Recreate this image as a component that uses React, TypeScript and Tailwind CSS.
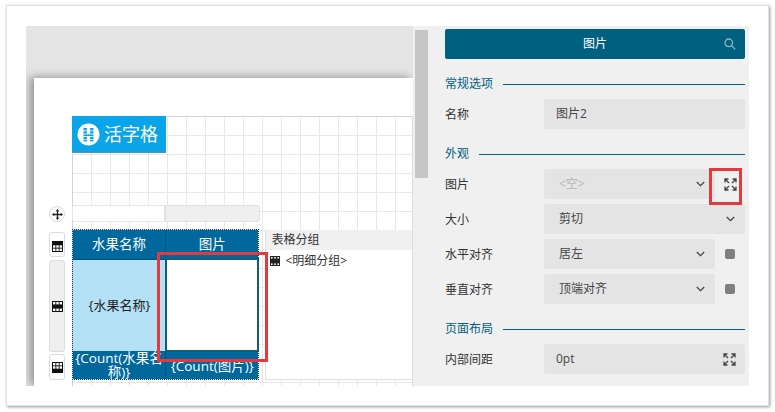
const FONT = "font-['Open_Sans','Noto_Sans_CJK_SC',sans-serif]";

function Expand({ color = "#444" }: { color?: string }) {
  return (
    <svg width="13" height="13" viewBox="0 0 13 13" fill="none" stroke={color} strokeWidth="1.3">
      <path d="M1 4.5V1h3.5M1 1l4 4" />
      <path d="M12 4.5V1H8.5M12 1L8 5" />
      <path d="M1 8.5V12h3.5M1 12l4-4" />
      <path d="M12 8.5V12H8.5M12 12L8 8" />
    </svg>
  );
}

function Chevron() {
  return (
    <svg width="9" height="6" viewBox="0 0 9 6" fill="none" stroke="#444" strokeWidth="1.3">
      <path d="M.8 1l3.7 3.6L8.2 1" />
    </svg>
  );
}

function TableIcon({ variant }: { variant: "top" | "mid" | "bottom" }) {
  const rows = { top: [0, 1, 1], mid: [1, 0, 1], bottom: [1, 1, 0] }[variant];
  return (
    <svg width="11" height="11" viewBox="0 0 11 11">
      <rect width="11" height="11" fill="#111" />
      {[0, 1, 2].map((c) =>
        [0, 1, 2].map((r) => (
          <rect key={`${c}${r}`} x={1 + c * 3.3} y={1 + r * 3.3} width="2.4" height="2.4" fill={rows[r] ? "#fff" : "#111"} />
        )),
      )}
    </svg>
  );
}

function FilmIcon() {
  return (
    <svg width="10" height="10" viewBox="0 0 10 10">
      <rect width="10" height="10" fill="#222" />
      <rect x="1" y="1" width="1.6" height="1.6" fill="#fff" />
      <rect x="4.2" y="1" width="1.6" height="1.6" fill="#fff" />
      <rect x="7.4" y="1" width="1.6" height="1.6" fill="#fff" />
      <rect x="1" y="7.4" width="1.6" height="1.6" fill="#fff" />
      <rect x="4.2" y="7.4" width="1.6" height="1.6" fill="#fff" />
      <rect x="7.4" y="7.4" width="1.6" height="1.6" fill="#fff" />
    </svg>
  );
}

function Logo() {
  return (
    <svg width="23" height="23" viewBox="0 0 23 23">
      <circle cx="11.5" cy="11.5" r="11" fill="#fff" />
      <g fill="#0aa5e8">
        <rect x="6.5" y="5" width="3.4" height="2.4" />
        <rect x="13.1" y="5" width="3.4" height="2.4" />
        <rect x="6.5" y="8.2" width="3.4" height="2.4" />
        <rect x="13.1" y="8.2" width="3.4" height="2.4" />
        <rect x="6.5" y="11.4" width="10" height="1.6" />
        <rect x="6.5" y="13.8" width="3.4" height="2.2" />
        <rect x="13.1" y="13.8" width="3.4" height="2.2" />
        <rect x="6.5" y="16.6" width="3.4" height="1.8" />
        <rect x="13.1" y="16.6" width="3.4" height="1.8" />
      </g>
    </svg>
  );
}

function Section({ title, className = "" }: { title: string; className?: string }) {
  return (
    <div className={`flex items-center h-[20px] mt-[15px] mb-[5px] ${className}`}>
      <span className="text-[12px] text-[#00607f] leading-none whitespace-nowrap">{title}</span>
      <div className="h-px bg-[#00607f] ml-[10px] flex-1" />
    </div>
  );
}

function Row({ label, children, className = "" }: { label: string; children: React.ReactNode; className?: string }) {
  return (
    <div className={`flex items-center h-[30px] ${className}`}>
      <span className="w-[99px] pt-[1px] text-[12px] text-[#333] shrink-0">{label}</span>
      {children}
    </div>
  );
}

function Select({ value, wide, muted }: { value: string; wide?: boolean; muted?: boolean }) {
  return (
    <div className={`h-[30px] rounded-[2px] bg-[#e4e4e4] flex items-center pl-[15px] pr-[10px] ${wide ? "w-[201px]" : "w-[171px]"}`}>
      <span className={`flex-1 text-[12px] ${muted ? "text-[#b5b5b5]" : "text-[#444]"}`}>{value}</span>
      <Chevron />
    </div>
  );
}

function Square() {
  return <div className="ml-[10px] w-[10px] h-[10px] rounded-[2px] bg-[#7f7f7f]" />;
}

export default function App() {
  return (
    <div className={`w-[775px] h-[412px] bg-white overflow-hidden pt-[5px] pl-[6px] ${FONT}`}>
      <div className="w-[763px] h-[401px] bg-white border border-[#e2e2e2] shadow-[1px_1px_3px_rgba(0,0,0,0.4)] pt-[20px] pl-[19px]">
        <div className="flex w-[723px] h-[360px] bg-[#f0f0f0]">
          {/* Designer area */}
          <div className="w-[387px] h-full bg-[#e4e4e4] pt-[52px] pl-[8px] overflow-hidden shrink-0">
            <div className="relative h-[308px] w-[379px] bg-white pt-[38px] pl-[38px] shadow-[-4px_-1px_8px_rgba(0,0,0,0.35)]">
              <div className="relative w-[341px] h-[270px] border-r border-[#dcdcdc] shadow-[inset_1px_1px_0_#d4d4d4] bg-[linear-gradient(to_right,#e8e8e8_1px,transparent_1px),linear-gradient(to_bottom,#e8e8e8_1px,transparent_1px)] bg-[size:19px_19px]">
                <div className="w-[94px] h-[37px] bg-[#0aa5e8] flex items-center pl-[5px] gap-[4px] border-b border-dotted border-[#888]">
                  <Logo />
                  <span className="text-[18px] text-white leading-none whitespace-nowrap">活字格</span>
                </div>
                <div className="flex w-[188px] h-[17px] mt-[52px]">
                  <div className="w-[93px] bg-white border border-[#e6e6e6] rounded-l-[3px]" />
                  <div className="flex-1 bg-[#efefef] border border-[#e0e0e0] rounded-r-[3px]" />
                </div>
                <div className="flex mt-[7px]">
                  {/* table */}
                  <div className="w-[188px] h-[151px] flex flex-col border border-dotted border-[#003f66]">
                    <div className="flex h-[29px] bg-[#00689c] text-white text-[13.5px]">
                      <div className="w-[93px] flex items-center justify-center border-r border-[#00507a]">水果名称</div>
                      <div className="flex-1 flex items-center justify-center">图片</div>
                    </div>
                    <div className="flex h-[93px]">
                      <div className="w-[93px] bg-[#b5e1f6] flex items-center justify-center text-[13px] text-[#222] border-t border-[#00507a]">{"{水果名称}"}</div>
                      <div className="relative flex-1 -mx-px -my-px bg-white border-2 border-[#135d78]" />
                    </div>
                    <div className="flex flex-1 bg-[#00689c] text-white text-[13.5px]">
                      <div className="w-[93px] text-center leading-[14px] border-r border-[#00507a] whitespace-nowrap">
                        {"{Count(水果名"}
                        <br />
                        {"称)}"}
                      </div>
                      <div className="flex-1 flex items-center justify-center pt-[3px]">{"{Count(图片)}"}</div>
                    </div>
                  </div>
                  {/* group panel */}
                  <div className="ml-[6px] mt-[1px] w-[147px] h-[150px] bg-white flex flex-col border-l border-b border-[#e0e0e0]">
                    <div className="h-[20px] bg-[#f0f0f0] text-[12px] text-[#333] flex items-center pl-[5px]">表格分组</div>
                    <div className="flex items-center h-[20px] pt-[1px] pl-[4px] gap-[5px] text-[12px] text-[#333]">
                      <FilmIcon />
                      <span>{"<明细分组>"}</span>
                    </div>
                  </div>
                </div>
              </div>
              {/* handles */}
              <div className="absolute left-[15px] top-[128px] w-[16px] h-[16px] rounded-full bg-white border border-[#d8d8d8] flex items-center justify-center">
                <svg width="11" height="11" viewBox="0 0 11 11" fill="#222">
                  <path d="M5.5 0L7.3 2.2H6.2V4.8H8.8V3.7L11 5.5 8.8 7.3V6.2H6.2V8.8H7.3L5.5 11 3.7 8.8H4.8V6.2H2.2V7.3L0 5.5 2.2 3.7V4.8H4.8V2.2H3.7z" />
                </svg>
              </div>
              <div className="absolute left-[15px] top-[154px] w-[16px] h-[25px] rounded-[3px] bg-white border border-[#dcdcdc] flex items-center justify-center pt-[3px]">
                <TableIcon variant="top" />
              </div>
              <div className="absolute left-[15px] top-[182px] w-[16px] h-[92px] rounded-[3px] bg-[#efefef] border border-[#dcdcdc] flex items-center justify-center">
                <TableIcon variant="mid" />
              </div>
              <div className="absolute left-[15px] top-[276px] w-[16px] h-[26px] rounded-[3px] bg-white border border-[#dcdcdc] flex items-center justify-center">
                <TableIcon variant="bottom" />
              </div>
              {/* red highlight */}
              <div className="absolute left-[123px] top-[174px] w-[111px] h-[110px] border-[3px] border-[#e4393f]" />
            </div>
          </div>
          {/* scrollbar */}
          <div className="w-[17px] h-full bg-[#f0f0f0] pt-[4px] pl-[2px] shrink-0">
            <div className="w-[13px] h-[148px] bg-[#c6c6c6]" />
          </div>
          {/* Property panel */}
          <div className="relative flex-1 pt-[3px] pl-[15px] pr-[4px] text-[12px]">
            <div className="relative h-[30px] w-[300px] bg-[#00607f] rounded-[2px] flex items-center justify-center text-white text-[12px]">
              图片
              <svg className="absolute right-[9px] top-[9px]" width="12" height="12" viewBox="0 0 12 12" fill="none" stroke="#8fb4c2" strokeWidth="1.3">
                <circle cx="4.8" cy="4.8" r="3.8" />
                <path d="M7.6 7.6l3.6 3.6" />
              </svg>
            </div>
            <Section title="常规选项" />
            <Row label="名称">
              <div className="w-[201px] h-[30px] rounded-[2px] bg-[#e4e4e4] flex items-center pl-[12px] text-[#444]">图片2</div>
            </Row>
            <Section title="外观" />
            <Row label="图片">
              <Select value="<空>" muted />
              <div className="ml-[9px] flex"><Expand /></div>
            </Row>
            <Row label="大小" className="mt-[5px]">
              <Select value="剪切" wide />
            </Row>
            <Row label="水平对齐" className="mt-[5px]">
              <Select value="居左" />
              <Square />
            </Row>
            <Row label="垂直对齐" className="mt-[5px]">
              <Select value="顶端对齐" />
              <Square />
            </Row>
            <Section title="页面布局" />
            <Row label="内部间距">
              <div className="w-[201px] h-[30px] rounded-[2px] bg-[#e4e4e4] flex items-center pl-[12px] pr-[9px] text-[#444]">
                <span className="flex-1">0pt</span>
                <Expand />
              </div>
            </Row>
            <div className="absolute left-[279px] top-[142px] w-[33px] h-[37px] border-[3px] border-[#e4393f]" />
          </div>
        </div>
      </div>
    </div>
  );
}
